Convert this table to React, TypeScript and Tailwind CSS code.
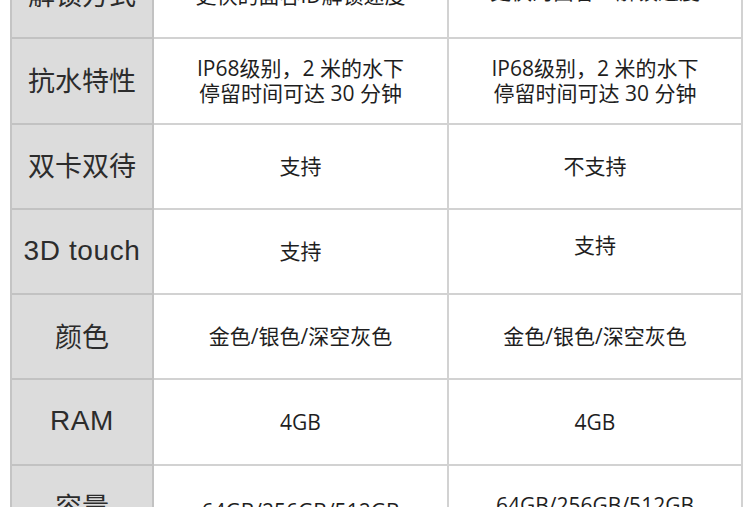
import React from 'react';

type Row = {
  label: string;
  latin?: boolean;
  a: string[];
  b: string[];
  aShift?: string;
  bShift?: string;
};

const rows: Row[] = [
  { label: '解锁方式', a: ['更快的面容ID解锁速度'], b: ['更快的面容ID解锁速度'], bShift: 'pb-[8px]' },
  { label: '抗水特性', a: ['IP68级别，2 米的水下', '停留时间可达 30 分钟'], b: ['IP68级别，2 米的水下', '停留时间可达 30 分钟'] },
  { label: '双卡双待', a: ['支持'], b: ['不支持'] },
  { label: '3D touch', latin: true, a: ['支持'], b: ['支持'], bShift: 'pb-[12px]' },
  { label: '颜色', a: ['金色/银色/深空灰色'], b: ['金色/银色/深空灰色'] },
  { label: 'RAM', latin: true, a: ['4GB'], b: ['4GB'] },
  { label: '容量', a: ['64GB/256GB/512GB'], b: ['64GB/256GB/512GB'], aShift: 'pt-[8px]', bShift: 'pb-[4px]' },
];

const Cell = ({ lines, shift = '' }: { lines: string[]; shift?: string }) => (
  <div
    className={`flex flex-col items-center justify-center border-b-2 border-r-2 border-[#d2d2d2] bg-white text-[21px] leading-[25px] text-[#1e1e1e] ${shift}`}
    style={{ fontFamily: '"Open Sans", "Noto Sans CJK SC", sans-serif' }}
  >
    {lines.map((l, i) => (
      <span key={i}>{l}</span>
    ))}
  </div>
);

export default function App() {
  return (
    <div className="h-[507px] w-[750px] overflow-hidden bg-white">
      <div className="ml-[10px] mt-[-46px] grid w-[733px] grid-cols-[142px_295px_294px] border-l-2 border-[#c4c4c4]">
        {rows.map((r) => (
          <React.Fragment key={r.label}>
            <div
              className={`flex h-[85.3px] items-center justify-center border-b-2 border-r-2 border-[#c2c2c2] bg-[#dcdcdc] pb-[2px] text-[#2c2c2c] ${
                r.latin ? 'text-[28px] tracking-[0.6px]' : 'text-[27px]'
              }`}
              style={{
                fontFamily: r.latin
                  ? '"Liberation Sans", "Noto Sans CJK SC", sans-serif'
                  : '"Noto Sans CJK SC", sans-serif',
              }}
            >
              {r.label}
            </div>
            <Cell lines={r.a} shift={r.aShift} />
            <Cell lines={r.b} shift={r.bShift} />
          </React.Fragment>
        ))}
      </div>
    </div>
  );
}
